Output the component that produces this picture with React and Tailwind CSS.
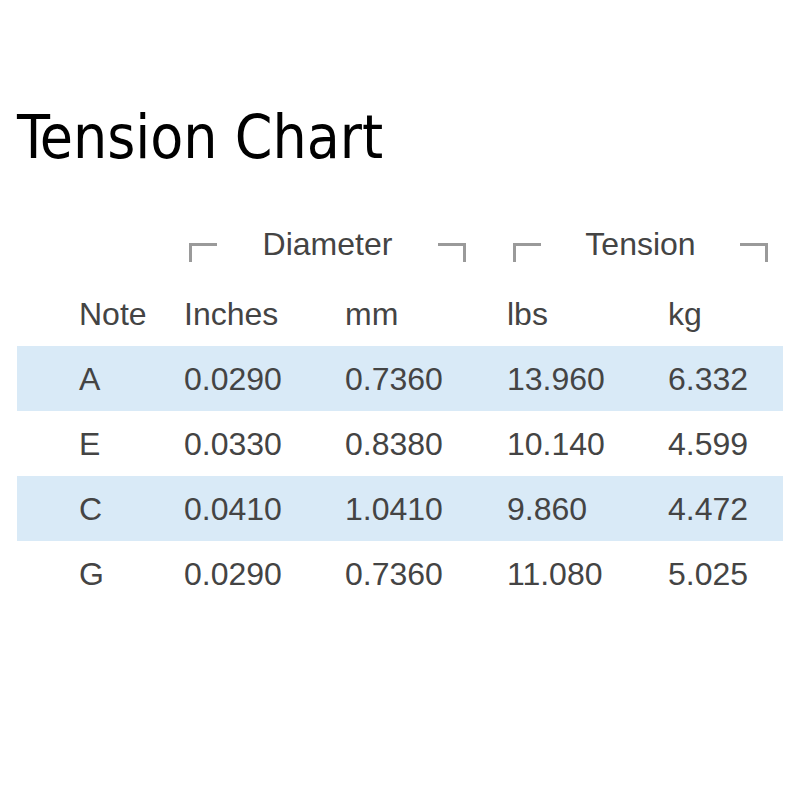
export default function App() {
  const rows = [
    ["A", "0.0290", "0.7360", "13.960", "6.332"],
    ["E", "0.0330", "0.8380", "10.140", "4.599"],
    ["C", "0.0410", "1.0410", "9.860", "4.472"],
    ["G", "0.0290", "0.7360", "11.080", "5.025"],
  ];
  const cols = "grid grid-cols-[105px_161px_162px_161px_1fr] pl-[62px]";
  const LB = () => (
    <div className="mt-[17px] w-[28px] h-[19px] border-t-[3px] border-l-[3px] border-[#9a9a9a]" />
  );
  const RB = () => (
    <div className="mt-[17px] w-[28px] h-[19px] border-t-[3px] border-r-[3px] border-[#9a9a9a]" />
  );
  return (
    <div className="w-[800px] h-[800px] bg-white overflow-hidden pt-[107px]">
      <h1 className="pl-[17px] h-[60px] text-[60px] leading-none text-black font-['DejaVu_Sans_Condensed','DejaVu_Sans',sans-serif]">
        Tension Chart
      </h1>
      <div className="font-['Liberation_Sans',Arial,sans-serif] text-[32px] text-[#444]">
        <div className="mt-[59px] flex pl-[189px]">
          <div className="w-[277px] flex justify-between items-start">
            <LB />
            <div className="leading-[36px] h-[36px]">Diameter</div>
            <RB />
          </div>
          <div className="ml-[47px] w-[255px] flex justify-between items-start">
            <LB />
            <div className="leading-[36px] h-[36px]">Tension</div>
            <RB />
          </div>
        </div>
        <div className={`${cols} mt-[19px] mx-[17px] h-[65px] items-center`}>
          <div>Note</div>
          <div>Inches</div>
          <div>mm</div>
          <div>lbs</div>
          <div>kg</div>
        </div>
        {rows.map((r, i) => (
          <div
            key={i}
            className={`${cols} mx-[17px] h-[65px] items-center ${i % 2 === 0 ? "bg-[#d9eaf7]" : "bg-white"}`}
          >
            {r.map((c, j) => (
              <div key={j}>{c}</div>
            ))}
          </div>
        ))}
      </div>
    </div>
  );
}
